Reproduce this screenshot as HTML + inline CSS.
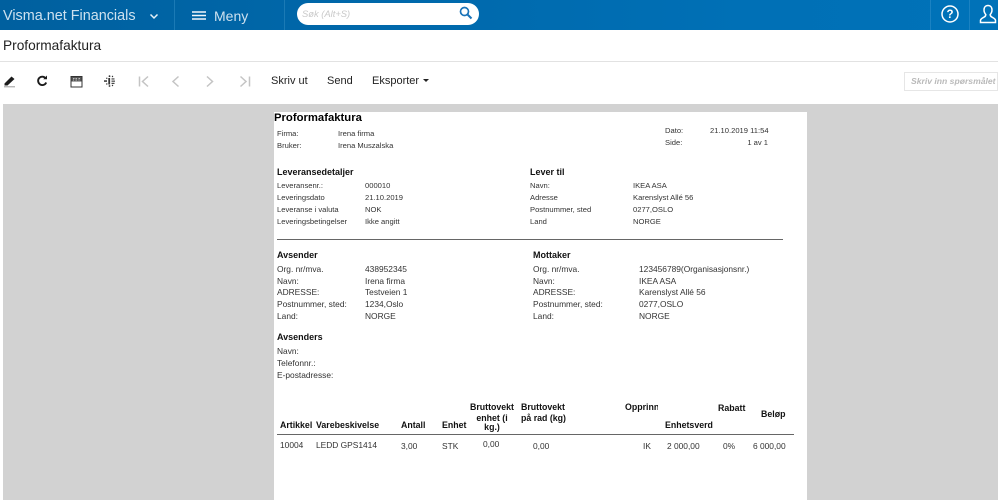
<!DOCTYPE html>
<html lang="no">
<head>
<meta charset="utf-8">
<title>Proformafaktura</title>
<style>
html,body{margin:0;padding:0;width:998px;height:500px;overflow:hidden;background:#fff;font-family:"Liberation Sans",sans-serif;}
#root{position:relative;width:998px;height:500px;overflow:hidden;background:#fff;}
.a{position:absolute;white-space:nowrap;}
.t{position:absolute;white-space:nowrap;line-height:12px;height:12px;color:#333;}
.s{font-size:7.6px;}
.m{font-size:8.4px;}
.h{font-size:9px;font-weight:bold;color:#111;}
.b{font-size:8.8px;font-weight:bold;color:#111;}
.c{text-align:center;}
.r{text-align:right;}
</style>
</head>
<body>
<div id="root">
  <!-- top bar -->
  <div class="a" style="left:0;top:0;width:998px;height:30px;background:linear-gradient(90deg,#00609f 0%,#0070b6 75%,#0072b8 100%);"></div>
  <div class="a" style="left:174px;top:0;width:1px;height:30px;background:#1b7ab5;"></div>
  <div class="a" style="left:284px;top:0;width:1px;height:30px;background:#1b7ab5;"></div>
  <div class="a" style="left:930px;top:0;width:1px;height:30px;background:#1b82c2;"></div>
  <div class="a" style="left:969px;top:0;width:1px;height:30px;background:#1b82c2;"></div>
  <div class="a" style="left:3px;top:8px;font-size:14.4px;line-height:17px;color:#cde1ef;">Visma.net Financials</div>
  <svg class="a" style="left:149px;top:13px" width="10" height="7" viewBox="0 0 10 7"><path d="M1.500 1.500 5 5l3.500-3.500" fill="none" stroke="#e6f1f8" stroke-width="1.500"/></svg>
  <svg class="a" style="left:192px;top:11px" width="15" height="11" viewBox="0 0 15 11"><path d="M0 1h14M0 4.500h14M0 8h14" stroke="#f2f7fb" stroke-width="1.600"/></svg>
  <div class="a" style="left:214px;top:8px;font-size:14px;line-height:17px;color:#cde1ef;">Meny</div>
  <div class="a" style="left:297px;top:3px;width:182px;height:22px;background:#fff;border-radius:11px;"></div>
  <div class="a" style="left:302px;top:8px;font-size:9.400px;line-height:12px;font-style:italic;color:#c9c9c9;">Søk (Alt+S)</div>
  <svg class="a" style="left:459px;top:6px" width="14" height="14" viewBox="0 0 14 14"><circle cx="5.500" cy="5.500" r="4" fill="none" stroke="#1a73b8" stroke-width="1.700"/><path d="M8.500 8.500 12.500 12.500" stroke="#1a73b8" stroke-width="2"/></svg>
  <svg class="a" style="left:940px;top:4px" width="20" height="20" viewBox="0 0 20 20"><circle cx="10" cy="10" r="8" fill="none" stroke="#fff" stroke-width="1.500"/><text x="10" y="14" text-anchor="middle" font-family="Liberation Sans" font-size="11.500" font-weight="bold" fill="#fff">?</text></svg>
  <svg class="a" style="left:979px;top:4px" width="18" height="20" viewBox="0 0 18 20"><path d="M9 1.500C6.500 1.500 5 3.400 5 5.800c0 2 .7 3.600 1.800 4.700 0 1.300-.4 2-1.700 2.600C3.300 14 1.700 14.700 1.500 16.200V18.500h15v-2.300c-.2-1.500-1.800-2.200-3.600-3.100-1.300-.6-1.700-1.300-1.700-2.600C12.300 9.400 13 7.800 13 5.800 13 3.400 11.500 1.500 9 1.500Z" fill="none" stroke="#fff" stroke-width="1.500"/></svg>

  <!-- title -->
  <div class="a" style="left:3px;top:37px;font-size:13.700px;line-height:17px;color:#222;">Proformafaktura</div>
  <div class="a" style="left:0;top:61px;width:998px;height:1px;background:#e2e2e2;"></div>

  <!-- toolbar -->
  <svg class="a" style="left:3px;top:75px" width="13" height="13" viewBox="0 0 13 13"><path d="M1.500 8.500 8.500 1.500 11.500 4 4.500 10.500H1.500Z" fill="#1c1c1c"/><path d="M1 11.800h11" stroke="#999" stroke-width="1"/></svg>
  <svg class="a" style="left:36px;top:75px" width="12" height="12" viewBox="0 0 12 12"><path d="M9.600 3.200A4.200 4.200 0 1 0 10.200 7.500" fill="none" stroke="#1c1c1c" stroke-width="1.900"/><path d="M7.200 4.300h3.800V0.500Z" fill="#1c1c1c"/></svg>
  <svg class="a" style="left:70px;top:75px" width="13" height="13" viewBox="0 0 13 13"><rect x="1" y="1.500" width="11" height="10.500" fill="#fff" stroke="#333"/><rect x="1.500" y="2" width="10" height="4.500" fill="#555"/><path d="M3 3.500h1.500M5.500 3.500h1.500M8.500 3.500h1.500M3 5h1M5.500 5h1.500M8.500 5h1" stroke="#ddd" stroke-width=".8"/></svg>
  <svg class="a" style="left:104px;top:75px" width="12" height="12" viewBox="0 0 12 12"><g fill="#333"><circle cx="5.500" cy="1.200" r=".9"/><circle cx="8.500" cy="1.500" r=".7"/><circle cx="2.800" cy="3.300" r=".7"/><rect x="0" y="5.300" width="3" height="1.500"/><rect x="4.300" y="3" width="1.800" height="6.500"/><circle cx="2.800" cy="9" r=".7"/><circle cx="5.500" cy="11" r=".9"/><circle cx="8.500" cy="10.500" r=".7"/><rect x="7.500" y="3.400" width="3" height="1.100"/><rect x="7.500" y="5.600" width="3.500" height="1.100"/><rect x="7.500" y="7.800" width="3" height="1.100"/></g></svg>
  <svg class="a" style="left:138px;top:75px" width="12" height="13" viewBox="0 0 12 13"><path d="M1.500 1.500v10M10 1.500 4.500 6.500 10 11.500" fill="none" stroke="#c4c4c4" stroke-width="1.500"/></svg>
  <svg class="a" style="left:171px;top:75px" width="10" height="13" viewBox="0 0 10 13"><path d="M7.500 1.500 2 6.500 7.500 11.500" fill="none" stroke="#c4c4c4" stroke-width="1.500"/></svg>
  <svg class="a" style="left:205px;top:75px" width="10" height="13" viewBox="0 0 10 13"><path d="M2 1.500 7.500 6.500 2 11.500" fill="none" stroke="#c4c4c4" stroke-width="1.500"/></svg>
  <svg class="a" style="left:239px;top:75px" width="12" height="13" viewBox="0 0 12 13"><path d="M10.500 1.500v10M1.500 1.500 7 6.500 1.500 11.500" fill="none" stroke="#c4c4c4" stroke-width="1.500"/></svg>
  <div class="a" style="left:271px;top:75px;font-size:11px;line-height:13px;color:#222;">Skriv ut</div>
  <div class="a" style="left:327px;top:75px;font-size:11px;line-height:13px;color:#222;">Send</div>
  <div class="a" style="left:372px;top:75px;font-size:11px;line-height:13px;color:#222;">Eksporter</div>
  <div class="a" style="left:423px;top:79px;width:0;height:0;border-left:3px solid transparent;border-right:3px solid transparent;border-top:3px solid #222;"></div>
  <div class="a" style="left:904px;top:72px;width:94px;height:19px;background:#fff;border:1px solid #e6e6e6;box-sizing:border-box;"></div>
  <div class="a" style="left:911px;top:75px;font-size:8.600px;line-height:12px;font-style:italic;font-weight:bold;color:#b9b9b9;">Skriv inn spørsmålet</div>

  <!-- report area -->
  <div class="a" style="left:3px;top:104px;width:995px;height:396px;background:#d2d2d2;"></div>
  <div class="a" style="left:274px;top:112px;width:533px;height:388px;background:#fff;"></div>

  <div class="a" style="left:274px;top:111px;font-size:11.300px;line-height:14px;font-weight:bold;color:#000;">Proformafaktura</div>
  <div class="t s" style="left:277px;top:128px;">Firma:</div>
  <div class="t s" style="left:338px;top:128px;">Irena firma</div>
  <div class="t s" style="left:277px;top:140px;">Bruker:</div>
  <div class="t s" style="left:338px;top:140px;">Irena Muszalska</div>
  <div class="t s" style="left:665px;top:125px;">Dato:</div>
  <div class="t s" style="left:710px;top:125px;">21.10.2019 11:54</div>
  <div class="t s" style="left:665px;top:137px;">Side:</div>
  <div class="t s r" style="left:710px;top:137px;width:58px;">1 av 1</div>

  <div class="t h" style="left:277px;top:166px;">Leveransedetaljer</div>
  <div class="t s" style="left:277px;top:180px;">Leveransenr.:</div>
  <div class="t s" style="left:365px;top:180px;">000010</div>
  <div class="t s" style="left:277px;top:192px;">Leveringsdato</div>
  <div class="t s" style="left:365px;top:192px;">21.10.2019</div>
  <div class="t s" style="left:277px;top:204px;">Leveranse i valuta</div>
  <div class="t s" style="left:365px;top:204px;">NOK</div>
  <div class="t s" style="left:277px;top:216px;">Leveringsbetingelser</div>
  <div class="t s" style="left:365px;top:216px;">Ikke angitt</div>

  <div class="t h" style="left:530px;top:166px;">Lever til</div>
  <div class="t s" style="left:530px;top:180px;">Navn:</div>
  <div class="t s" style="left:633px;top:180px;">IKEA ASA</div>
  <div class="t s" style="left:530px;top:192px;">Adresse</div>
  <div class="t s" style="left:633px;top:192px;">Karenslyst Allé 56</div>
  <div class="t s" style="left:530px;top:204px;">Postnummer, sted</div>
  <div class="t s" style="left:633px;top:204px;">0277,OSLO</div>
  <div class="t s" style="left:530px;top:216px;">Land</div>
  <div class="t s" style="left:633px;top:216px;">NORGE</div>

  <div class="a" style="left:277px;top:239px;width:506px;height:1px;background:#666;"></div>

  <div class="t h" style="left:277px;top:249px;">Avsender</div>
  <div class="t m" style="left:277px;top:263px;">Org. nr/mva.</div>
  <div class="t m" style="left:365px;top:263px;">438952345</div>
  <div class="t m" style="left:277px;top:275px;">Navn:</div>
  <div class="t m" style="left:365px;top:275px;">Irena firma</div>
  <div class="t m" style="left:277px;top:286px;">ADRESSE:</div>
  <div class="t m" style="left:365px;top:286px;">Testveien 1</div>
  <div class="t m" style="left:277px;top:298px;">Postnummer, sted:</div>
  <div class="t m" style="left:365px;top:298px;">1234,Oslo</div>
  <div class="t m" style="left:277px;top:310px;">Land:</div>
  <div class="t m" style="left:365px;top:310px;">NORGE</div>

  <div class="t h" style="left:533px;top:249px;">Mottaker</div>
  <div class="t m" style="left:533px;top:263px;">Org. nr/mva.</div>
  <div class="t m" style="left:639px;top:263px;">123456789(Organisasjonsnr.)</div>
  <div class="t m" style="left:533px;top:275px;">Navn:</div>
  <div class="t m" style="left:639px;top:275px;">IKEA ASA</div>
  <div class="t m" style="left:533px;top:286px;">ADRESSE:</div>
  <div class="t m" style="left:639px;top:286px;">Karenslyst Allé 56</div>
  <div class="t m" style="left:533px;top:298px;">Postnummer, sted:</div>
  <div class="t m" style="left:639px;top:298px;">0277,OSLO</div>
  <div class="t m" style="left:533px;top:310px;">Land:</div>
  <div class="t m" style="left:639px;top:310px;">NORGE</div>

  <div class="t h" style="left:277px;top:331px;">Avsenders</div>
  <div class="t m" style="left:277px;top:345px;">Navn:</div>
  <div class="t m" style="left:277px;top:357px;">Telefonnr.:</div>
  <div class="t m" style="left:277px;top:369px;">E-postadresse:</div>

  <!-- table header -->
  <div class="t b" style="left:280px;top:419px;">Artikkel</div>
  <div class="t b" style="left:316px;top:419px;">Varebeskivelse</div>
  <div class="t b" style="left:401px;top:419px;">Antall</div>
  <div class="t b" style="left:442px;top:419px;">Enhet</div>
  <div class="t b c" style="left:468px;top:401px;width:48px;">Bruttovekt</div>
  <div class="t b c" style="left:468px;top:412px;width:48px;">enhet (i</div>
  <div class="t b c" style="left:468px;top:421px;width:48px;">kg.)</div>
  <div class="t b" style="left:521px;top:401px;">Bruttovekt</div>
  <div class="t b" style="left:521px;top:412px;">på rad (kg)</div>
  <div class="t b" style="left:625px;top:401px;width:33px;overflow:hidden;">Opprinnelse</div>
  <div class="t b" style="left:665px;top:419px;width:48px;overflow:hidden;">Enhetsverdi</div>
  <div class="t b" style="left:718px;top:402px;">Rabatt</div>
  <div class="t b" style="left:761px;top:408px;">Beløp</div>
  <div class="a" style="left:277px;top:434px;width:517px;height:1px;background:#666;"></div>

  <!-- table row -->
  <div class="t m" style="left:280px;top:439px;">10004</div>
  <div class="t m" style="left:316px;top:439px;">LEDD GPS1414</div>
  <div class="t m" style="left:401px;top:440px;">3,00</div>
  <div class="t m" style="left:442px;top:440px;">STK</div>
  <div class="t m" style="left:483px;top:438px;">0,00</div>
  <div class="t m" style="left:533px;top:440px;">0,00</div>
  <div class="t m" style="left:643px;top:440px;">IK</div>
  <div class="t m" style="left:667px;top:440px;">2 000,00</div>
  <div class="t m" style="left:723px;top:440px;">0%</div>
  <div class="t m" style="left:753px;top:440px;">6 000,00</div>
</div>
</body>
</html>
